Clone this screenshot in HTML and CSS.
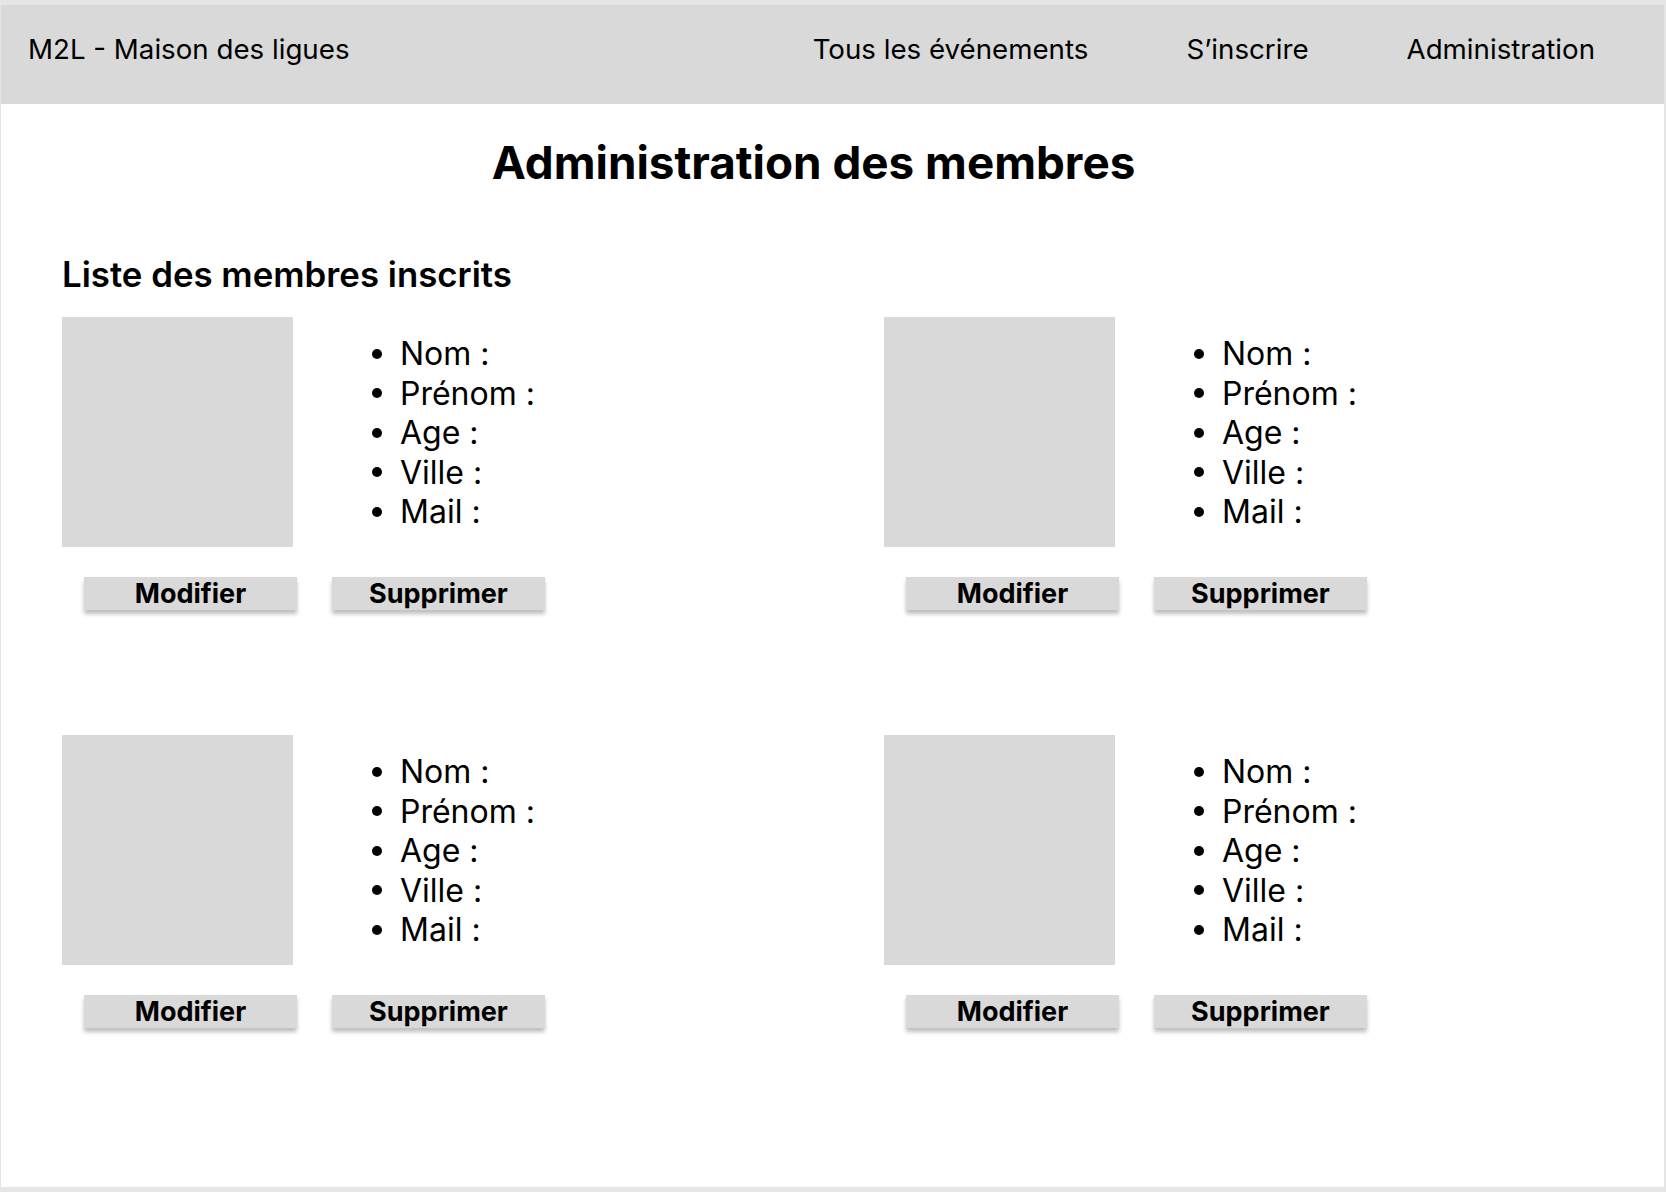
FILE: index.html
```html
<!DOCTYPE html>
<html lang="fr">
<head>
<meta charset="utf-8">
<title>M2L - Administration des membres</title>
<link rel="stylesheet" href="styles.css">
</head>
<body>
<div class="frame">
  <header class="topbar">
    <div class="brand">M2L - Maison des ligues</div>
    <nav class="nav">
      <a class="nav-link">Tous les événements</a>
      <a class="nav-link">S’inscrire</a>
      <a class="nav-link">Administration</a>
    </nav>
  </header>
  <main class="content">
    <h1 class="page-title">Administration des membres</h1>
    <h2 class="section-title">Liste des membres inscrits</h2>
    <div class="members">
      <div class="member">
        <div class="member-top">
          <div class="photo"></div>
          <ul class="fields">
            <li>Nom :</li><li>Prénom :</li><li>Age :</li><li>Ville :</li><li>Mail :</li>
          </ul>
        </div>
        <div class="actions">
          <button class="btn">Modifier</button>
          <button class="btn">Supprimer</button>
        </div>
      </div>
      <div class="member">
        <div class="member-top">
          <div class="photo"></div>
          <ul class="fields">
            <li>Nom :</li><li>Prénom :</li><li>Age :</li><li>Ville :</li><li>Mail :</li>
          </ul>
        </div>
        <div class="actions">
          <button class="btn">Modifier</button>
          <button class="btn">Supprimer</button>
        </div>
      </div>
      <div class="member">
        <div class="member-top">
          <div class="photo"></div>
          <ul class="fields">
            <li>Nom :</li><li>Prénom :</li><li>Age :</li><li>Ville :</li><li>Mail :</li>
          </ul>
        </div>
        <div class="actions">
          <button class="btn">Modifier</button>
          <button class="btn">Supprimer</button>
        </div>
      </div>
      <div class="member">
        <div class="member-top">
          <div class="photo"></div>
          <ul class="fields">
            <li>Nom :</li><li>Prénom :</li><li>Age :</li><li>Ville :</li><li>Mail :</li>
          </ul>
        </div>
        <div class="actions">
          <button class="btn">Modifier</button>
          <button class="btn">Supprimer</button>
        </div>
      </div>
    </div>
  </main>
</div>
</body>
</html>
```

FILE: styles.css
```css
* { box-sizing: border-box; }

html, body {
  margin: 0;
  padding: 0;
}

body {
  background: #e5e5e5;
  font-family: "Inter", "Liberation Sans", sans-serif;
  color: #000;
  padding: 5px 2px 5px 1px;
}

.frame {
  background: #ffffff;
  height: 1182px;
  overflow: hidden;
}

.topbar {
  display: flex;
  align-items: flex-start;
  height: 99px;
  background: #d9d9d9;
  padding: 28px 69px 0 27px;
  font-size: 27.7px;
  line-height: 1.21;
}

.brand {
  flex: none;
}

.nav {
  display: flex;
  gap: 98px;
  margin-left: auto;
}

.nav-link {
  color: #000;
  text-decoration: none;
}

.content {
  padding: 0 0 0 61px;
}

.page-title {
  margin: 31px 0 0 0;
  padding-right: 99px;
  font-size: 45.8px;
  font-weight: 700;
  line-height: 1.21;
  text-align: center;
}

.section-title {
  margin: 63px 0 0 0;
  font-size: 34.8px;
  font-weight: 600;
  line-height: 1.21;
}

.members {
  display: grid;
  grid-template-columns: 822px 1fr;
  row-gap: 125px;
  margin-top: 21px;
}

.member-top {
  display: flex;
  align-items: flex-start;
}

.photo {
  width: 231px;
  height: 230px;
  background: #d9d9d9;
  flex: none;
}

.fields {
  list-style: none;
  margin: 17.5px 0 0 79px;
  padding: 0;
  font-size: 32px;
  line-height: 39.5px;
}

.fields li {
  display: flex;
  align-items: center;
}

.fields li::before {
  content: "";
  width: 10px;
  height: 10px;
  border-radius: 50%;
  background: #000;
  margin-right: 18px;
  flex: none;
}

.actions {
  display: flex;
  gap: 35px;
  margin-top: 30px;
  padding-left: 22px;
}

.btn {
  width: 213px;
  height: 33px;
  border: 0;
  background: #d9d9d9;
  box-shadow: 0 4px 4px rgba(0, 0, 0, 0.25);
  font-family: "Inter", "Liberation Sans", sans-serif;
  font-size: 27px;
  font-weight: 700;
  line-height: 33px;
  padding: 0;
  color: #000;
}
```
